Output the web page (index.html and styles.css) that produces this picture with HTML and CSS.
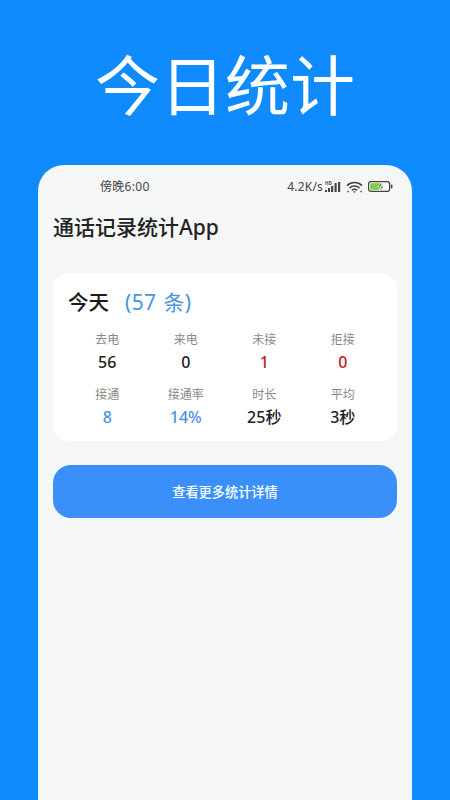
FILE: index.html
```html
<!DOCTYPE html>
<html lang="zh-CN">
<head>
<meta charset="utf-8">
<title>今日统计</title>
<link rel="stylesheet" href="styles.css">
</head>
<body>
<main class="screen">
  <h1 class="hero">今日统计</h1>
  <section class="phone">
    <div class="status">
      <span class="time">傍晚6:00</span>
      <div class="status-right">
        <span class="speed">4.2K/s</span>
        <svg class="ic-signal" viewBox="0 0 18 12" width="18" height="12">
          <text x="0" y="4" class="hd">HD</text>
          <rect x="0" y="9" width="2" height="2" fill="#444"/>
          <rect x="3" y="7" width="2" height="4" fill="#444"/>
          <rect x="6" y="5" width="2.2" height="6" fill="#444"/>
          <rect x="9.5" y="2" width="2.2" height="9" fill="#444"/>
          <rect x="13" y="1" width="2.2" height="10" fill="#444"/>
        </svg>
        <svg class="ic-wifi" viewBox="0 0 17 12" width="17" height="12" fill="none" stroke="#444" stroke-width="1.5">
          <path d="M1 4.6C5.2 .6 11.8 .6 16 4.6"/>
          <path d="M3.4 7C6.2 4.2 10.8 4.2 13.6 7"/>
          <path d="M5.8 9.3C7.2 7.9 9.8 7.9 11.2 9.3"/>
          <circle cx="8.5" cy="10.8" r=".9" fill="#444" stroke="none"/>
          <circle cx="15" cy="10.6" r=".8" fill="#444" stroke="none"/>
          <circle cx="2" cy="10.6" r=".8" fill="#444" stroke="none"/>
        </svg>
        <svg class="ic-batt" viewBox="0 0 25 11" width="25" height="11">
          <rect x=".6" y=".6" width="21" height="9.8" rx="2.4" fill="none" stroke="#444" stroke-width="1.2"/>
          <rect x="2.2" y="2.2" width="12" height="6.6" rx="1" fill="#7ccf45"/>
          <path d="M14 .8 9.2 6h3l-1.2 4.2L16.4 5h-3z" fill="#fff"/>
          <path d="M13.4 2 10.4 5.4h3l-1 3L15.4 5.4h-3z" fill="#444"/>
          <rect x="22.8" y="3.5" width="1.6" height="4" rx=".8" fill="#444"/>
        </svg>
      </div>
    </div>
    <h2 class="app-title">通话记录统计App</h2>
    <div class="card">
      <div class="card-head"><span class="today">今天</span><span class="count">(57 条)</span></div>
      <div class="grid">
        <div class="cell"><span class="label">去电</span><span class="value">56</span></div>
        <div class="cell"><span class="label">来电</span><span class="value">0</span></div>
        <div class="cell"><span class="label">未接</span><span class="value red">1</span></div>
        <div class="cell"><span class="label">拒接</span><span class="value red">0</span></div>
        <div class="cell"><span class="label">接通</span><span class="value blue">8</span></div>
        <div class="cell"><span class="label">接通率</span><span class="value blue">14%</span></div>
        <div class="cell"><span class="label">时长</span><span class="value">25秒</span></div>
        <div class="cell"><span class="label">平均</span><span class="value">3秒</span></div>
      </div>
    </div>
    <button class="more" type="button">查看更多统计详情</button>
  </section>
</main>
</body>
</html>
```
FILE: styles.css
```css
* { box-sizing: border-box; }
html, body { margin: 0; height: 100%; }
body {
  font-family: "Noto Sans", "Noto Sans CJK SC", sans-serif;
  background: #0f8bfd;
  overflow: hidden;
}
.screen {
  width: 450px;
  height: 800px;
  display: flex;
  flex-direction: column;
  align-items: center;
  overflow: hidden;
}
.hero {
  margin: 0;
  height: 165px;
  padding-top: 47px;
  color: #fff;
  font-size: 65px;
  line-height: 76px;
  font-weight: 400;
  white-space: nowrap;
}
.phone {
  width: 374px;
  flex: 1;
  background: #f5f7f7;
  border-radius: 26px 26px 0 0;
  padding: 0 15px;
  display: flex;
  flex-direction: column;
}
.status {
  height: 40px;
  display: flex;
  align-items: center;
  justify-content: space-between;
  padding: 3px 4px 0 47px;
  font-size: 12px;
  line-height: 16px;
  color: #444;
}
.time { letter-spacing: .3px; }
.status-right { display: flex; align-items: center; gap: 3px; }
.speed { letter-spacing: .2px; margin-right: -1px; }
.hd { font-size: 4.5px; fill: #444; font-weight: 700; }
.ic-batt { margin-left: 2px; }
.app-title {
  margin: 6px 0 1px;
  font-size: 21px;
  line-height: 32px;
  font-weight: 500;
  color: #222;
}
.card {
  margin-top: 29px;
  height: 168px;
  background: #fff;
  border-radius: 16px;
  padding: 13px 15px 0;
}
.card-head { height: 30px; display: flex; align-items: center; white-space: nowrap; }
.today { font-size: 20.5px; font-weight: 500; color: #1c1c1c; }
.count { font-size: 21px; color: #4a94dc; margin-left: 16px; word-spacing: 1px; letter-spacing: .4px; }
.grid {
  margin-top: 15px;
  display: grid;
  grid-template-columns: repeat(4, 1fr);
  row-gap: 10px;
}
.cell {
  height: 45px;
  display: flex;
  flex-direction: column;
  align-items: center;
  gap: 1px;
}
.label { font-size: 12px; line-height: 18px; color: #888; }
.value { font-size: 16px; line-height: 24px; font-weight: 500; color: #222; }
.red { color: #c8191f; }
.blue { color: #4a94dc; }
.more {
  margin-top: 24px;
  height: 53px;
  border: 0;
  border-radius: 18px;
  background: #3a90f8;
  color: #fff;
  font-family: inherit;
  font-size: 13.2px;
  font-weight: 500;
  padding-bottom: 2px;
}
```
